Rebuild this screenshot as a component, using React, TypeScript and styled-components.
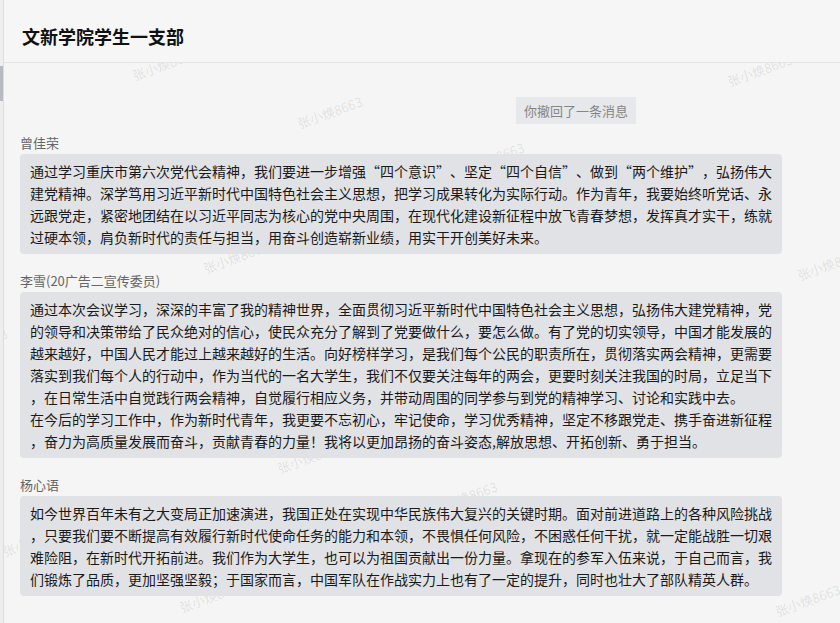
import React from "react";
import styled, { createGlobalStyle } from "styled-components";

const GlobalStyle = createGlobalStyle`
  html, body { margin: 0; padding: 0; background: #f5f5f5; }
  body {
    font-family: "Noto Sans CJK SC", "Noto Sans", "Liberation Sans", sans-serif;
    -webkit-font-smoothing: antialiased;
  }
  * { box-sizing: border-box; }
`;

const Page = styled.div`
  display: flex;
  width: 840px;
  height: 623px;
  overflow: hidden;
  background: #f5f5f5;
`;

const SideStrip = styled.div`
  width: 4px;
  flex: none;
  background: #eeeeee;
  border-right: 1px solid #dddddd;
  display: flex;
  flex-direction: column;
`;

const Thumb = styled.div`
  margin-top: 66px;
  width: 3px;
  height: 35px;
  background: #b7bbc1;
`;

const Main = styled.div`
  flex: 1;
  display: flex;
  flex-direction: column;
  min-width: 0;
`;

const Header = styled.header`
  height: 63px;
  flex: none;
  padding: 24px 18px 0;
  border-bottom: 1px solid #e4e4e4;
  background: #f6f6f6;
  position: relative;
  z-index: 2;
`;

const Title = styled.h1`
  margin: 0;
  font-size: 18px;
  line-height: 24px;
  font-weight: 700;
  color: #111;
`;

const Chat = styled.div`
  flex: 1;
  position: relative;
  overflow: hidden;
  padding: 34px 0 0 16px;
  display: flex;
  flex-direction: column;
  align-items: flex-start;
`;

const WatermarkLayer = styled.div`
  position: absolute;
  inset: 0;
  z-index: 0;
  pointer-events: none;
`;

const Mark = styled.span`
  position: absolute;
  font-size: 13px;
  line-height: 13px;
  white-space: nowrap;
  color: rgba(0, 0, 0, 0.1);
  transform: rotate(-20deg);
  transform-origin: left bottom;
`;

const Recall = styled.div`
  position: relative;
  z-index: 1;
  margin-left: 496px;
  height: 27px;
  line-height: 27px;
  padding: 0 8px;
  font-size: 13px;
  color: #858585;
  background: #e6e8ec;
`;

const Group = styled.div<{ $first?: boolean }>`
  position: relative;
  z-index: 1;
  margin-top: ${(p) => (p.$first ? "10px" : "18px")};
  display: flex;
  flex-direction: column;
  gap: 2px;
`;

const Name = styled.div`
  font-size: 13px;
  line-height: 18px;
  color: #666;
`;

const Bubble = styled.div`
  width: 762px;
  padding: 6px 10px;
  font-size: 14px;
  line-height: 22px;
  color: #1a1a1a;
  background: #e1e2e6;
  border-radius: 4px;
  white-space: pre;
`;

const Quote = styled.span<{ $open: boolean }>`
  display: inline-block;
  width: 14px;
  text-align: ${(p) => (p.$open ? "right" : "left")};
`;

const marks = [
  [131, 19], [296, 67], [726, 25], [202, 212], [796, 219], [-59, 299],
  [276, 412], [431, 452], [178, 551], [774, 555], [1, 495], [458, 113],
];

const messages = [
  {
    name: "曾佳荣",
    lines: [
      "通过学习重庆市第六次党代会精神，我们要进一步增强“四个意识”、坚定“四个自信”、做到“两个维护”，弘扬伟大",
      "建党精神。深学笃用习近平新时代中国特色社会主义思想，把学习成果转化为实际行动。作为青年，我要始终听党话、永",
      "远跟党走，紧密地团结在以习近平同志为核心的党中央周围，在现代化建设新征程中放飞青春梦想，发挥真才实干，练就",
      "过硬本领，肩负新时代的责任与担当，用奋斗创造崭新业绩，用实干开创美好未来。",
    ],
  },
  {
    name: "李雪(20广告二宣传委员)",
    lines: [
      "通过本次会议学习，深深的丰富了我的精神世界，全面贯彻习近平新时代中国特色社会主义思想，弘扬伟大建党精神，党",
      "的领导和决策带给了民众绝对的信心，使民众充分了解到了党要做什么，要怎么做。有了党的切实领导，中国才能发展的",
      "越来越好，中国人民才能过上越来越好的生活。向好榜样学习，是我们每个公民的职责所在，贯彻落实两会精神，更需要",
      "落实到我们每个人的行动中，作为当代的一名大学生，我们不仅要关注每年的两会，更要时刻关注我国的时局，立足当下",
      "，在日常生活中自觉践行两会精神，自觉履行相应义务，并带动周围的同学参与到党的精神学习、讨论和实践中去。",
      "在今后的学习工作中，作为新时代青年，我更要不忘初心，牢记使命，学习优秀精神，坚定不移跟党走、携手奋进新征程",
      "，奋力为高质量发展而奋斗，贡献青春的力量！我将以更加昂扬的奋斗姿态,解放思想、开拓创新、勇于担当。",
    ],
  },
  {
    name: "杨心语",
    lines: [
      "如今世界百年未有之大变局正加速演进，我国正处在实现中华民族伟大复兴的关键时期。面对前进道路上的各种风险挑战",
      "，只要我们要不断提高有效履行新时代使命任务的能力和本领，不畏惧任何风险，不困惑任何干扰，就一定能战胜一切艰",
      "难险阻，在新时代开拓前进。我们作为大学生，也可以为祖国贡献出一份力量。拿现在的参军入伍来说，于自己而言，我",
      "们锻炼了品质，更加坚强坚毅；于国家而言，中国军队在作战实力上也有了一定的提升，同时也壮大了部队精英人群。",
    ],
  },
];

function renderText(text: string) {
  return text.split(/([“”])/).map((part, i) =>
    part === "“" || part === "”" ? (
      <Quote key={i} $open={part === "“"}>
        {part}
      </Quote>
    ) : (
      part
    )
  );
}

export default function App() {
  return (
    <>
      <GlobalStyle />
      <Page>
        <SideStrip>
          <Thumb />
        </SideStrip>
        <Main>
          <Header>
            <Title>文新学院学生一支部</Title>
          </Header>
          <Chat>
            <WatermarkLayer>
              {marks.map(([x, y], i) => (
                <Mark key={i} style={{ left: x, top: y - 13 }}>
                  张小焕8663
                </Mark>
              ))}
            </WatermarkLayer>
            <Recall>你撤回了一条消息</Recall>
            {messages.map((m, i) => (
              <Group key={m.name} $first={i === 0}>
                <Name>{m.name}</Name>
                <Bubble>{renderText(m.lines.join("\n"))}</Bubble>
              </Group>
            ))}
          </Chat>
        </Main>
      </Page>
    </>
  );
}
